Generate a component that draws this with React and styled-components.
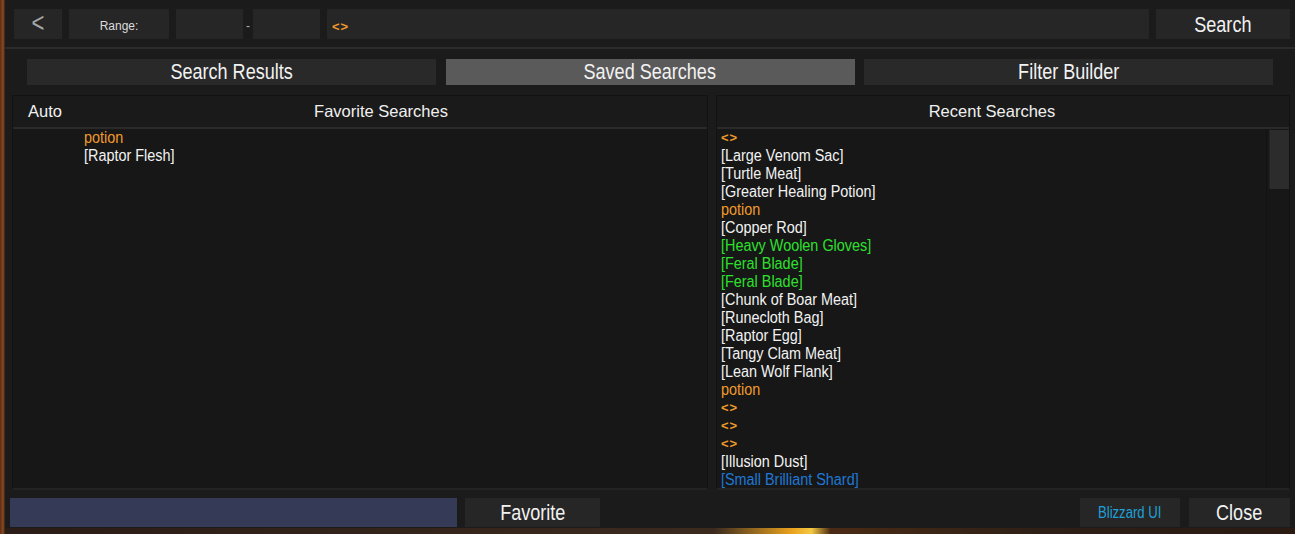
import React from "react";
import styled, { createGlobalStyle } from "styled-components";

const GlobalStyle = createGlobalStyle`
  html, body { margin: 0; padding: 0; }
  body {
    background: #2a1a12;
    overflow: hidden;
    font-family: "Liberation Sans", Arial, sans-serif;
  }
`;

const Screen = styled.div`
  width: 1295px;
  height: 534px;
  display: flex;
  flex-direction: column;
  background:
    linear-gradient(90deg, #5a2c14 0px, #8a4a22 3px, #3a2012 5px, #3a2418 60%, #2d1c14 100%);
`;

const Frame = styled.div`
  margin-left: 5px;
  width: 1290px;
  height: 528px;
  background: #1b1b1b;
  display: flex;
  flex-direction: column;
  box-sizing: border-box;
`;

const GroundStrip = styled.div`
  flex: 1;
  margin-left: 5px;
  background: linear-gradient(90deg, #2a1c16 0%, #3b2a1e 55%, #e9a21e 61%, #f5c842 62.5%, #4a2a14 64%, #2e2016 80%, #2a1a12 100%);
`;

const TopBar = styled.div`
  display: flex;
  gap: 7px;
  height: 30px;
  padding: 9px 5px 0 9px;
  align-items: stretch;
`;

const Box = styled.div`
  background: #262626;
  width: ${(p) => (p.$w ? `${p.$w}px` : "auto")};
  flex: ${(p) => (p.$grow ? 1 : "none")};
  display: flex;
  align-items: center;
  justify-content: ${(p) => p.$justify || "center"};
  padding: ${(p) => p.$pad || "0"};
  box-sizing: border-box;
  color: #e8e8e8;
`;

const Narrow = styled.span`
  display: inline-block;
  font-family: "Liberation Sans", Arial, sans-serif;
  font-size: ${(p) => p.$size || 22}px;
  line-height: 1;
  color: ${(p) => p.$color || "#f2f2f2"};
  transform: scaleX(0.82);
  white-space: nowrap;
  margin-top: ${(p) => p.$dy || 0}px;
`;

const SmallLabel = styled.span`
  font-size: 12px;
  color: #dcdcdc;
  margin-top: 4px;
`;

const RangeGroup = styled.div`
  display: flex;
  align-items: center;
`;

const Dash = styled.span`
  width: 10px;
  text-align: center;
  font-size: 12px;
  color: #b0b0b0;
  margin-top: 3px;
`;

const SearchToken = styled.span`
  color: #f09a2c;
  font-size: 13px;
  font-weight: bold;
  letter-spacing: 1px;
  margin-top: 4px;
`;

const Separator = styled.div`
  height: 2px;
  background: #2b2b2b;
  margin-top: 8px;
`;

const TabRow = styled.div`
  display: grid;
  grid-template-columns: 409px 409px 409px;
  column-gap: 9.5px;
  padding-left: 22px;
  margin-top: 10px;
  height: 26px;
`;

const Tab = styled.div`
  background: ${(p) => (p.$active ? "#5a5a5a" : "#292929")};
  display: flex;
  align-items: center;
  justify-content: center;
`;

const PanelRow = styled.div`
  display: flex;
  gap: 8px;
  margin-top: 10px;
  padding: 0 5px 0 7px;
  height: 395px;
`;

const Panel = styled.div`
  width: ${(p) => (p.$w ? `${p.$w}px` : "auto")};
  flex: ${(p) => (p.$w ? "none" : 1)};
  background: #171717;
  border: 1px solid #121212;
  border-bottom: 2px solid #232323;
  box-sizing: border-box;
  display: flex;
  flex-direction: column;
`;

const Header = styled.div`
  height: 31px;
  display: grid;
  grid-template-columns: ${(p) => p.$cols};
  align-items: center;
  border-bottom: 2px solid #2a2a2a;
  background: #1a1a1a;
  font-size: 16.5px;
  color: #f0f0f0;
  flex: none;
`;

const HeaderCell = styled.div`
  text-align: ${(p) => p.$align || "center"};
  padding-left: ${(p) => p.$pl || 0}px;
`;

const Body = styled.div`
  flex: 1;
  display: flex;
  min-height: 0;
`;

const List = styled.div`
  flex: 1;
  padding-left: ${(p) => p.$pl}px;
  font-size: 16px;
  line-height: 18px;
`;

const Item = styled.div`
  color: ${(p) => p.$color};
  white-space: nowrap;
  transform: scaleX(0.9);
  transform-origin: left center;
`;

const Token = styled(Item)`
  font-weight: bold;
  font-size: 13px;
  letter-spacing: 1px;
  transform: none;
`;

const ScrollTrack = styled.div`
  width: 22px;
  flex: none;
  border-left: 1px solid #121212;
  display: flex;
  flex-direction: column;
  align-items: flex-end;
`;

const Thumb = styled.div`
  width: 20px;
  height: 59px;
  margin-top: 1px;
  background: #2c2c2c;
  border-left: 1px solid #222;
  box-sizing: border-box;
`;

const BottomBar = styled.div`
  display: flex;
  gap: 8px;
  margin-top: 8px;
  padding: 0 5px 0 5px;
  height: 29px;
`;

const NameInput = styled.div`
  width: 447px;
  background: #353a56;
`;

const Spacer = styled.div`
  flex: 1;
`;

const Button = styled.div`
  width: ${(p) => p.$w}px;
  margin-left: ${(p) => p.$ml || 0}px;
  background: #262626;
  display: flex;
  align-items: center;
  justify-content: center;
`;

const WHITE = "#f2f2f2";
const ORANGE = "#f09a2c";
const GREEN = "#2ee02e";
const BLUE = "#1f78d6";

const favorites = [
  { t: "potion", c: ORANGE },
  { t: "[Raptor Flesh]", c: WHITE },
];

const recent = [
  { t: "<>", c: ORANGE, b: true },
  { t: "[Large Venom Sac]", c: WHITE },
  { t: "[Turtle Meat]", c: WHITE },
  { t: "[Greater Healing Potion]", c: WHITE },
  { t: "potion", c: ORANGE },
  { t: "[Copper Rod]", c: WHITE },
  { t: "[Heavy Woolen Gloves]", c: GREEN },
  { t: "[Feral Blade]", c: GREEN },
  { t: "[Feral Blade]", c: GREEN },
  { t: "[Chunk of Boar Meat]", c: WHITE },
  { t: "[Runecloth Bag]", c: WHITE },
  { t: "[Raptor Egg]", c: WHITE },
  { t: "[Tangy Clam Meat]", c: WHITE },
  { t: "[Lean Wolf Flank]", c: WHITE },
  { t: "potion", c: ORANGE },
  { t: "<>", c: ORANGE, b: true },
  { t: "<>", c: ORANGE, b: true },
  { t: "<>", c: ORANGE, b: true },
  { t: "[Illusion Dust]", c: WHITE },
  { t: "[Small Brilliant Shard]", c: BLUE },
];

export default function App() {
  return (
    <>
      <GlobalStyle />
      <Screen>
        <Frame>
          <TopBar>
            <Box $w={48}>
              <Narrow $size={27} $color="#a6a6a6" $dy={-2}>&lt;</Narrow>
            </Box>
            <Box $w={100}>
              <SmallLabel>Range:</SmallLabel>
            </Box>
            <RangeGroup>
              <Box $w={67} style={{ height: "100%" }} />
              <Dash>-</Dash>
              <Box $w={67} style={{ height: "100%" }} />
            </RangeGroup>
            <Box $grow $justify="flex-start" $pad="0 0 0 5px">
              <SearchToken>&lt;&gt;</SearchToken>
            </Box>
            <Box $w={134}>
              <Narrow $dy={2}>Search</Narrow>
            </Box>
          </TopBar>
          <Separator />
          <TabRow>
            <Tab>
              <Narrow>Search Results</Narrow>
            </Tab>
            <Tab $active>
              <Narrow>Saved Searches</Narrow>
            </Tab>
            <Tab>
              <Narrow>Filter Builder</Narrow>
            </Tab>
          </TabRow>
          <PanelRow>
            <Panel $w={696}>
              <Header $cols="64px 1fr 22px">
                <HeaderCell $align="left" $pl={15}>Auto</HeaderCell>
                <HeaderCell>Favorite Searches</HeaderCell>
                <div />
              </Header>
              <Body>
                <List $pl={71}>
                  {favorites.map((f, i) => (
                    <Item key={i} $color={f.c}>{f.t}</Item>
                  ))}
                </List>
              </Body>
            </Panel>
            <Panel>
              <Header $cols="1fr 22px">
                <HeaderCell>Recent Searches</HeaderCell>
                <div />
              </Header>
              <Body>
                <List $pl={4}>
                  {recent.map((r, i) =>
                    r.b ? (
                      <Token key={i} $color={r.c}>{r.t}</Token>
                    ) : (
                      <Item key={i} $color={r.c}>{r.t}</Item>
                    )
                  )}
                </List>
                <ScrollTrack>
                  <Thumb />
                </ScrollTrack>
              </Body>
            </Panel>
          </PanelRow>
          <BottomBar>
            <NameInput />
            <Button $w={135}>
              <Narrow>Favorite</Narrow>
            </Button>
            <Spacer />
            <Button $w={100}>
              <Narrow $size={16} $color="#1ea0d8">Blizzard UI</Narrow>
            </Button>
            <Button $w={101} $ml={1}>
              <Narrow>Close</Narrow>
            </Button>
          </BottomBar>
        </Frame>
        <GroundStrip />
      </Screen>
    </>
  );
}
